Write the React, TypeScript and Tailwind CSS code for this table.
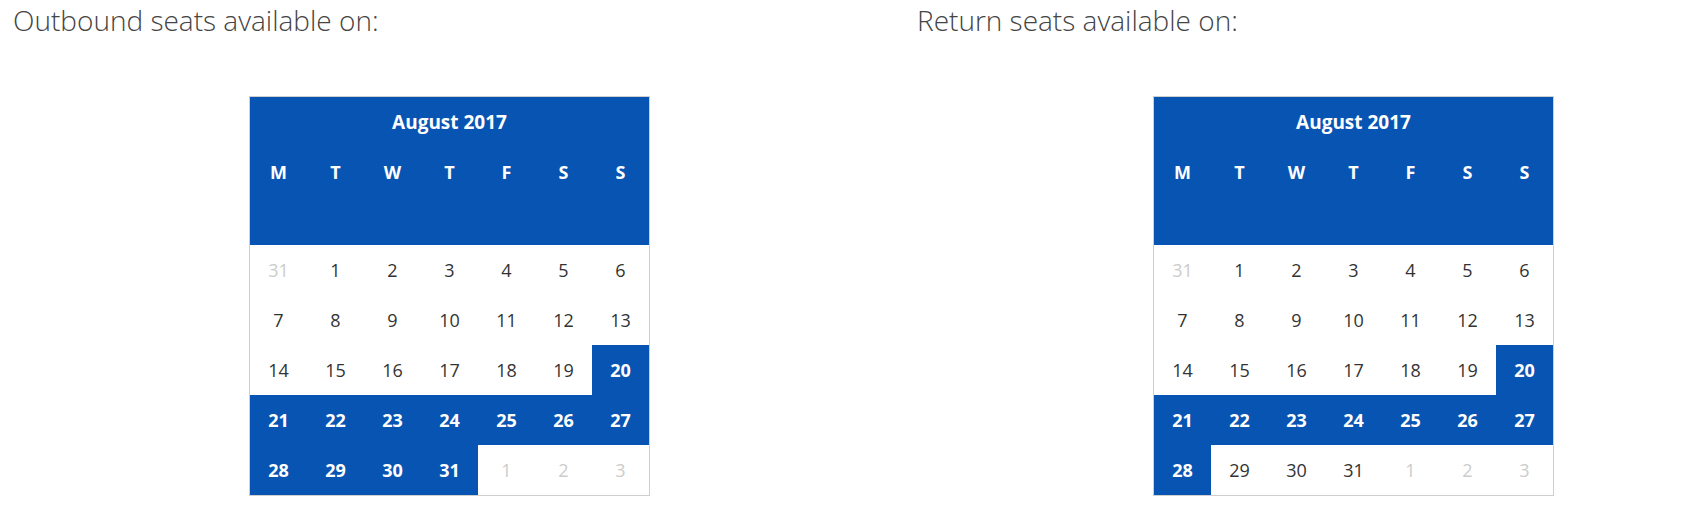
const DAYS = ['M', 'T', 'W', 'T', 'F', 'S', 'S'];

type Cell = { n: number; muted?: boolean; on?: boolean };

function buildWeeks(lastOn: number): Cell[][] {
  const cells: Cell[] = [{ n: 31, muted: true }];
  for (let d = 1; d <= 31; d++) {
    cells.push({ n: d, on: d >= 20 && d <= lastOn });
  }
  for (let d = 1; d <= 3; d++) cells.push({ n: d, muted: true });
  const weeks: Cell[][] = [];
  for (let i = 0; i < cells.length; i += 7) weeks.push(cells.slice(i, i + 7));
  return weeks;
}

function Calendar({ lastOn }: { lastOn: number }) {
  const weeks = buildWeeks(lastOn);
  return (
    <div className="ml-[236px] w-[401px] border border-[#cfcfcf] bg-white">
      <div className="bg-[#0854b3] text-white">
        <div className="flex h-[50px] items-center justify-center text-[19px] font-bold">
          August 2017
        </div>
        <div className="grid h-[50px] grid-cols-7 items-center text-[18px] font-bold">
          {DAYS.map((d, i) => (
            <div key={i} className="text-center">
              {d}
            </div>
          ))}
        </div>
        <div className="h-[48px]" />
      </div>
      {weeks.map((w, wi) => (
        <div key={wi} className="grid h-[50px] grid-cols-7">
          {w.map((c, ci) => (
            <div
              key={ci}
              className={
                c.on
                  ? 'flex items-center justify-center bg-[#0854b3] text-[18px] font-bold text-white'
                  : c.muted
                    ? 'flex items-center justify-center text-[18px] text-[#cccccc]'
                    : 'flex items-center justify-center text-[18px] text-[#333333]'
              }
            >
              {c.n}
            </div>
          ))}
        </div>
      ))}
    </div>
  );
}

export default function App() {
  return (
    <div
      className="min-h-[522px] bg-white pl-[13px] text-[#333333]"
      style={{ fontFamily: '"Open Sans", "Noto Sans", sans-serif' }}
    >
      <div className="grid grid-cols-[904px_1fr]">
        <div>
          <h2 className="text-[28px] font-light leading-[40px] text-[#444444]">
            Outbound seats available on:
          </h2>
          <div className="mt-[56px]">
            <Calendar lastOn={31} />
          </div>
        </div>
        <div>
          <h2 className="text-[28px] font-light leading-[40px] text-[#444444]">
            Return seats available on:
          </h2>
          <div className="mt-[56px]">
            <Calendar lastOn={28} />
          </div>
        </div>
      </div>
    </div>
  );
}
